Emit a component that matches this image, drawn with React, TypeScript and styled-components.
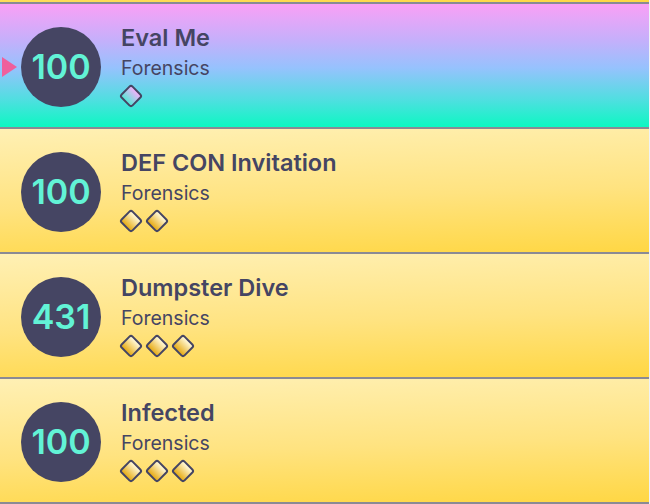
import styled, { createGlobalStyle } from "styled-components"

const GlobalStyle = createGlobalStyle`
  html, body {
    margin: 0;
    padding: 0;
    background: #eef2f8;
    overflow: hidden;
    font-family: Inter, "Noto Sans", sans-serif;
  }
`

type Tone = "active" | "plain"

const List = styled.div`
  width: 649px;
  margin-top: -121px;
`

const Item = styled.div<{ $tone: Tone }>`
  position: relative;
  display: flex;
  align-items: center;
  gap: 20px;
  height: 123px;
  padding-left: 21px;
  box-sizing: content-box;
  border-bottom: 2px solid #8a8a94;
  background: ${(p) =>
    p.$tone === "active"
      ? "linear-gradient(180deg, #faa0f6 0%, #c4b0fb 30%, #96c2fd 52%, #4fdfe0 78%, #0cf8c2 100%)"
      : "linear-gradient(178deg, #fff0b4 0%, #ffe380 55%, #ffd744 100%)"};
`

const Marker = styled.div`
  position: absolute;
  left: 2px;
  top: 53px;
  width: 0;
  height: 0;
  border-top: 10px solid transparent;
  border-bottom: 10px solid transparent;
  border-left: 15px solid #ef5f9c;
`

const Score = styled.div`
  width: 80px;
  height: 80px;
  margin-top: 2px;
  border-radius: 50%;
  background: #454563;
  color: #62f3d6;
  display: flex;
  align-items: center;
  justify-content: center;
  font-size: 34px;
  font-weight: 600;
`

const Info = styled.div`
  display: flex;
  flex-direction: column;
  color: #454563;
`

const Title = styled.div`
  font-size: 23.5px;
  font-weight: 600;
  line-height: 28px;
`

const Category = styled.div`
  margin-top: 4px;
  font-size: 19.5px;
  line-height: 24px;
`

const Gems = styled.div`
  display: flex;
  gap: 2px;
  margin-top: 4px;
  margin-left: -2px;
`

function Gem({ tone, id }: { tone: Tone; id: string }) {
  const top = tone === "active" ? "#eab4f8" : "#fff6d0"
  const bottom = tone === "active" ? "#5ee4d8" : "#e8b020"
  return (
    <svg width="24" height="24" viewBox="0 0 24 24">
      <defs>
        <linearGradient id={id} x1="0" y1="0" x2="0" y2="1">
          <stop offset="0.1" stopColor={top} />
          <stop offset="0.9" stopColor={bottom} />
        </linearGradient>
      </defs>
      <rect
        x="4.3"
        y="4.3"
        width="15.4"
        height="15.4"
        rx="2.2"
        transform="rotate(45 12 12)"
        fill={`url(#${id})`}
        stroke="#454563"
        strokeWidth="2"
      />
    </svg>
  )
}

const challenges = [
  { score: 100, title: "Eval Me", gems: 1, tone: "active" as Tone },
  { score: 100, title: "DEF CON Invitation", gems: 2, tone: "plain" as Tone },
  { score: 431, title: "Dumpster Dive", gems: 3, tone: "plain" as Tone },
  { score: 100, title: "Infected", gems: 3, tone: "plain" as Tone },
]

export default function App() {
  return (
    <>
      <GlobalStyle />
      <List>
        <Item $tone="plain" />
        {challenges.map((c, i) => (
          <Item key={c.title} $tone={c.tone}>
            {c.tone === "active" && <Marker />}
            <Score>{c.score}</Score>
            <Info>
              <Title>{c.title}</Title>
              <Category>Forensics</Category>
              <Gems>
                {Array.from({ length: c.gems }).map((_, g) => (
                  <Gem key={g} tone={c.tone} id={`gem-${i}-${g}`} />
                ))}
              </Gems>
            </Info>
          </Item>
        ))}
      </List>
    </>
  )
}
